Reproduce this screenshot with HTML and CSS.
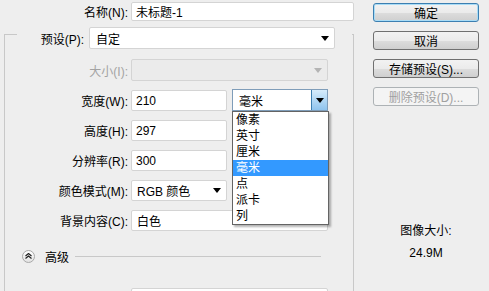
FILE: index.html
```html
<!DOCTYPE html>
<html lang="zh-CN">
<head>
    <meta charset="UTF-8">
    <title>新建</title>
    <link rel="stylesheet" href="styles.css">
</head>
<body>
<div class="dialog">
    <div class="main">
        <div class="row name-row">
            <label class="label name-label">名称(N):</label>
            <input class="field name-field" type="text" value="未标题-1">
        </div>

        <div class="group">
            <div class="row preset-row">
                <label class="label preset-label">预设(P):</label>
                <div class="field select preset-select">
                    <span>自定</span>
                    <svg class="arrow" width="8" height="5" viewBox="0 0 8 5"><path d="M0 0H8L4 5Z"/></svg>
                </div>
            </div>

            <div class="row size-row">
                <label class="label disabled">大小(I):</label>
                <div class="field select wide is-disabled">
                    <span></span>
                    <svg class="arrow" width="8" height="5" viewBox="0 0 8 5"><path d="M0 0H8L4 5Z"/></svg>
                </div>
            </div>

            <div class="row">
                <label class="label">宽度(W):</label>
                <input class="field short" type="text" value="210">
                <div class="unit">
                    <div class="field select unit-select">
                        <span>毫米</span>
                        <div class="unit-btn">
                            <svg width="8" height="5" viewBox="0 0 8 5"><path d="M0 0H8L4 5Z"/></svg>
                        </div>
                    </div>
                    <ul class="menu">
                        <li>像素</li>
                        <li>英寸</li>
                        <li>厘米</li>
                        <li class="active">毫米</li>
                        <li>点</li>
                        <li>派卡</li>
                        <li>列</li>
                    </ul>
                </div>
            </div>

            <div class="row">
                <label class="label">高度(H):</label>
                <input class="field short" type="text" value="297">
            </div>

            <div class="row">
                <label class="label">分辨率(R):</label>
                <input class="field short" type="text" value="300">
            </div>

            <div class="row">
                <label class="label">颜色模式(M):</label>
                <div class="field select short">
                    <span>RGB 颜色</span>
                    <svg class="arrow" width="8" height="5" viewBox="0 0 8 5"><path d="M0 0H8L4 5Z"/></svg>
                </div>
            </div>

            <div class="row">
                <label class="label">背景内容(C):</label>
                <div class="field select wide">
                    <span>白色</span>
                </div>
            </div>

            <div class="advanced">
                <span class="toggle">
                    <svg width="7" height="6" viewBox="0 0 7 6"><path d="M0.5 3L3.5 0.5L6.5 3M0.5 5.5L3.5 3L6.5 5.5" fill="none" stroke="#222" stroke-width="1.2"/></svg>
                </span>
                <span class="adv-text">高级</span>
                <span class="rule"></span>
            </div>

            <div class="row extra-row">
                <span class="label"></span>
                <input class="field wide" type="text" value="">
            </div>
        </div>
    </div>

    <div class="side">
        <button class="btn primary">确定</button>
        <button class="btn">取消</button>
        <button class="btn">存储预设(S)...</button>
        <button class="btn" disabled>删除预设(D)...</button>

        <div class="info">
            <div>图像大小:</div>
            <div class="info-value">24.9M</div>
        </div>
    </div>
</div>
</body>
</html>
```

FILE: styles.css
```css
body {
    margin: 0;
    font-family: "Liberation Sans", "Noto Sans CJK SC", sans-serif;
    font-size: 12px;
    color: #000;
    background: #eeeeee;
}
.dialog {
    display: flex;
    width: 489px;
    height: 291px;
    overflow: hidden;
}
.main {
    width: 360px;
    flex: none;
}
.row {
    display: flex;
    align-items: center;
    height: 21px;
    margin-top: 9px;
}
.label {
    width: 126px;
    flex: none;
    text-align: right;
    padding-right: 3px;
    box-sizing: border-box;
    white-space: nowrap;
}
.label.disabled {
    color: #a3a3a3;
}
.field {
    height: 100%;
    box-sizing: border-box;
    border: 1px solid #d4d4d4;
    border-radius: 2px;
    background: #fff;
    padding: 0 4px;
    font: inherit;
    color: #000;
    outline: none;
}
.select {
    display: flex;
    align-items: center;
    justify-content: space-between;
    padding: 0 5px 0 5px;
}
.arrow {
    fill: #000;
}
.short {
    width: 96px;
}
.wide {
    width: 197px;
}

/* name row */
.name-row {
    margin-top: 2px;
    height: 19px;
}
.name-label {
    width: 131px;
}
.name-field {
    width: 223px;
}

/* group box */
.group {
    margin: 13px 0 0 4px;
    width: 350px;
    height: 300px;
    box-sizing: border-box;
    border: 1px solid #c8c8c8;
    border-bottom: none;
}
.preset-row {
    margin: -8px 0 0 12px;
    width: 335px;
    height: 22px;
    background: #eeeeee;
}
.preset-label {
    width: 72px;
    padding-right: 5px;
}
.preset-select {
    width: 246px;
    padding-left: 6px;
}
.size-row {
    margin-top: 10px;
    height: 22px;
}
.is-disabled {
    background: #ebebeb;
    border-color: #d4d4d4;
}
.is-disabled .arrow {
    fill: #b4b4b4;
}

/* unit dropdown */
.unit {
    position: relative;
    margin-left: 5px;
    height: 22px;
    margin-top: -1px;
}
.unit-select {
    width: 96px;
    padding: 0 0 0 6px;
    border-color: #7f9db9;
    border-radius: 0;
}
.unit-btn {
    width: 15px;
    height: 100%;
    display: flex;
    align-items: center;
    justify-content: center;
    background: linear-gradient(#d6ecfb, #8fc4ee);
    border-left: 1px solid #3c7fb1;
}
.menu {
    position: absolute;
    top: 22px;
    left: 0;
    width: 97px;
    margin: 0;
    padding: 0;
    list-style: none;
    background: #fff;
    border: 1px solid #646464;
    box-sizing: border-box;
    box-shadow: 2px 2px 2px rgba(0, 0, 0, 0.3);
    z-index: 2;
}
.menu li {
    height: 16px;
    line-height: 16px;
    padding-left: 3px;
}
.menu li.active {
    background: #3399ff;
    color: #fff;
}

/* advanced */
.advanced {
    display: flex;
    align-items: center;
    height: 16px;
    margin-top: 17px;
    padding-left: 17px;
}
.toggle {
    width: 11px;
    height: 11px;
    border: 1px solid #a8a8a8;
    border-radius: 50%;
    background: linear-gradient(#ffffff, #e2e2e2);
    display: flex;
    align-items: center;
    justify-content: center;
}
.adv-text {
    margin-left: 10px;
}
.rule {
    flex: 1;
    height: 1px;
    background: #c8c8c8;
    margin: 1px 32px 0 6px;
}
.extra-row {
    margin-top: 24px;
}

/* side buttons */
.side {
    flex: 1;
    padding: 3px 10px 0 13px;
    display: flex;
    flex-direction: column;
}
.btn {
    width: 106px;
    height: 19px;
    margin-bottom: 9px;
    padding: 0;
    font: inherit;
    color: #000;
    border: 1px solid #707070;
    border-radius: 3px;
    background: linear-gradient(#f2f2f2 0%, #ebebeb 50%, #dddddd 51%, #cfcfcf 100%);
}
.btn.primary {
    border-color: #3c7fb1;
    box-shadow: inset 0 0 0 1px #a9dcf6;
}
.btn:disabled {
    color: #a0a0a0;
    border-color: #adb2b5;
    background: #f4f4f4;
}
.info {
    width: 106px;
    margin-top: 108px;
    text-align: center;
    line-height: 16px;
}
.info-value {
    margin-top: 6px;
}
```
